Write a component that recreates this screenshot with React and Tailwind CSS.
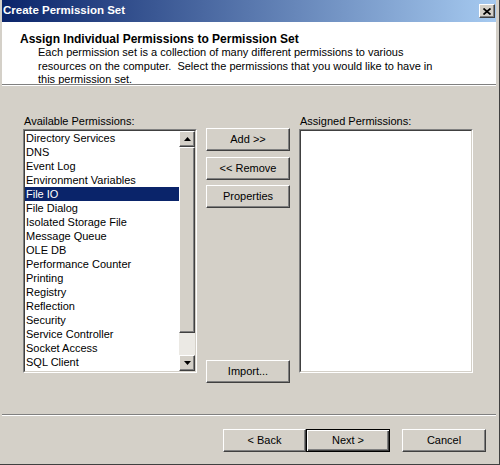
import React from 'react'

const raised =
  'border border-t-white border-l-white border-r-[#404040] border-b-[#404040] shadow-[inset_-1px_-1px_0_#808080]'

const available = [
  'Directory Services',
  'DNS',
  'Event Log',
  'Environment Variables',
  'File IO',
  'File Dialog',
  'Isolated Storage File',
  'Message Queue',
  'OLE DB',
  'Performance Counter',
  'Printing',
  'Registry',
  'Reflection',
  'Security',
  'Service Controller',
  'Socket Access',
  'SQL Client',
]

function Button({ children, isDefault, className = '' }) {
  const bevel = isDefault
    ? 'border border-black shadow-[inset_1px_1px_0_#fff,inset_-1px_-1px_0_#404040,inset_-2px_-2px_0_#808080]'
    : raised
  return (
    <div
      className={`h-[23px] flex items-center justify-center bg-[#d4d0c8] text-[11px] text-black ${bevel} ${className}`}
    >
      {children}
    </div>
  )
}

function Arrow({ up }) {
  return (
    <svg width="7" height="4" viewBox="0 0 7 4">
      <polygon points={up ? '3.5,0 7,4 0,4' : '0,0 7,0 3.5,4'} fill="#000" />
    </svg>
  )
}

function ScrollButton({ up }) {
  return (
    <div className={`h-[16px] flex items-center justify-center bg-[#d4d0c8] ${raised}`}>
      <Arrow up={up} />
    </div>
  )
}

function ListBox({ children, scroll }) {
  return (
    <div className="h-[244px] border border-t-[#808080] border-l-[#808080] border-b-white border-r-white">
      <div className="h-full flex bg-white border border-t-[#404040] border-l-[#404040] border-b-[#d4d0c8] border-r-[#d4d0c8]">
        <div className="flex-1 flex flex-col overflow-hidden">{children}</div>
        {scroll && (
          <div className="w-[16px] flex flex-col">
            <ScrollButton up />
            <div className={`h-[186px] bg-[#d4d0c8] ${raised}`} />
            <div className="flex-1 bg-[#ebe9e4]" />
            <ScrollButton />
          </div>
        )}
      </div>
    </div>
  )
}

function Separator() {
  return <div className="h-[2px] border-t border-t-[#808080] border-b border-b-white" />
}

export default function App() {
  return (
    <div className="w-[500px] h-[465px] flex flex-col bg-[#d4d0c8] pl-[2px] pr-[3px] pb-[2px] border-r border-b border-[#404040] font-['Liberation_Sans',Arial,sans-serif] text-black select-none">
      {/* Title bar */}
      <div className="h-[22px] flex items-center justify-between pl-[1px] pr-[1px] bg-[linear-gradient(to_right,#0a246a,#a6caf0)]">
        <span className="text-[11.5px] font-bold text-white">Create Permission Set</span>
        <div className={`w-[16px] h-[14px] flex items-center justify-center bg-[#d4d0c8] ${raised}`}>
          <svg width="8" height="7" viewBox="0 0 8 7">
            <path d="M0.5 0.5 L7.5 6.5 M7.5 0.5 L0.5 6.5" stroke="#000" strokeWidth="1.7" />
          </svg>
        </div>
      </div>

      {/* Wizard header */}
      <div className="h-[62px] bg-white pt-[10px] pl-[18px]">
        <div className="text-[12px] font-bold leading-[14px]">
          Assign Individual Permissions to Permission Set
        </div>
        <p className="pl-[18px] text-[11px] leading-[13.5px] whitespace-nowrap">
          Each permission set is a collection of many different permissions to various
          <br />
          resources on the computer.&nbsp; Select the permissions that you would like to have in
          <br />
          this permission set.
        </p>
      </div>
      <Separator />

      {/* Body */}
      <div className="flex-1 flex pl-[21px] text-[11px]">
        <div className="w-[174px] pt-[29px]">
          <div className="h-[14px] leading-[13px] pl-[1px]">Available Permissions:</div>
          <ListBox scroll>
            {available.map((name) => (
              <div
                key={name}
                className={`h-[14px] leading-[14px] pl-[1px] whitespace-nowrap ${
                  name === 'File IO' ? 'bg-[#0a246a] text-white' : ''
                }`}
              >
                {name}
              </div>
            ))}
          </ListBox>
        </div>

        <div className="w-[84px] ml-[9px] pt-[42px] flex flex-col">
          <Button>Add &gt;&gt;</Button>
          <Button className="mt-[6px]">&lt;&lt; Remove</Button>
          <Button className="mt-[5px]">Properties</Button>
          <Button className="mt-[152px]">Import...</Button>
        </div>

        <div className="w-[174px] ml-[9px] pt-[29px]">
          <div className="h-[14px] leading-[13px] pl-[1px]">Assigned Permissions:</div>
          <ListBox />
        </div>
      </div>

      <Separator />

      {/* Footer */}
      <div className="h-[46px] flex justify-end items-start pt-[13px] pr-[10px]">
        <Button className="w-[83px]">&lt; Back</Button>
        <Button isDefault className="w-[84px]">
          Next &gt;
        </Button>
        <Button className="w-[84px] ml-[12px]">Cancel</Button>
      </div>
    </div>
  )
}
